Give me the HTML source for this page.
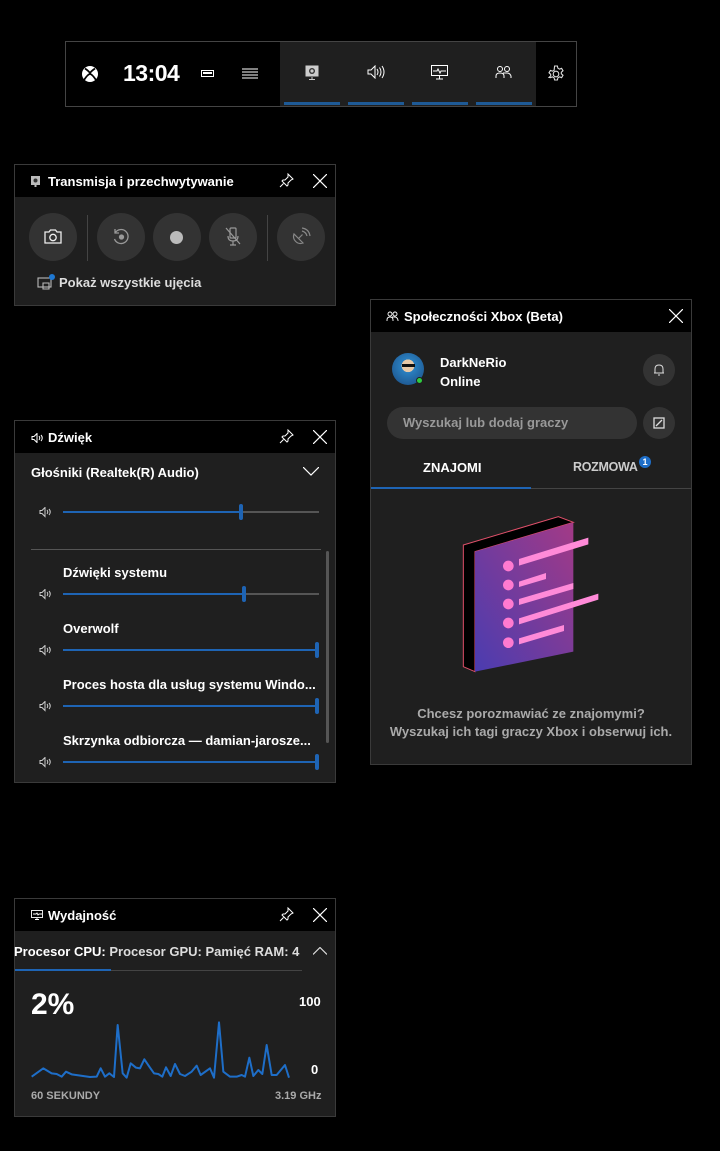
<!DOCTYPE html>
<html><head><meta charset="utf-8"><style>
*{margin:0;padding:0;box-sizing:border-box}
body{width:720px;height:1151px;background:#000;position:relative;overflow:hidden;font-family:"Liberation Sans",sans-serif;color:#fff;font-weight:bold;font-size:13px}
.a{position:absolute}
.panel{position:absolute;border:1px solid #3a3a3a;background:#1f1f1f}
.hdr{position:absolute;left:0;right:0;top:0;height:32px;background:#000}
.ttl{position:absolute;left:33px;top:9px;font-size:13px}
.circ{position:absolute;width:48px;height:48px;border-radius:50%;background:#333}
.track{position:absolute;height:2px;background:#555}
.fill{position:absolute;left:0;top:0;height:2px;background:#1e64b4}
.thumb{position:absolute;width:4px;height:16px;background:#1e64b4;border-radius:2px;top:-7px}
.lbl{position:absolute;font-size:13px}
</style></head><body>

<!-- top bar -->
<div class="a" style="left:65px;top:41px;width:512px;height:66px;border:1px solid #444;background:#000"></div>
<div class="a" style="left:280px;top:42px;width:256px;height:64px;background:#1f1f1f"></div>
<svg class="a" style="left:81px;top:65px" width="18" height="18" viewBox="0 0 18 18"><circle cx="9" cy="9" r="8" fill="#fff"/><path d="M4 3.5 Q9 7 9 8.5 Q9 7 14 3.5 M3 15 Q7 9 9 9 Q11 9 15 15" stroke="#000" stroke-width="1.8" fill="none"/></svg>
<div class="a" style="left:123px;top:60px;font-size:23px;font-weight:bold;letter-spacing:-0.5px">13:04</div>
<div class="a" style="left:201px;top:70px;width:13px;height:7px;border:1.5px solid #fff"><div style="margin:1px;height:2px;background:#fff"></div></div>
<svg class="a" style="left:242px;top:68px" width="16" height="11"><path d="M0 1h16M0 4h16M0 7h16M0 10h16" stroke="#fff" stroke-width="1"/></svg>
<svg class="a" style="left:305px;top:65px" width="14" height="15"><rect x="0.5" y="0.5" width="13" height="11" fill="#ccc"/><circle cx="7" cy="6" r="3" fill="#333"/><circle cx="7" cy="6" r="1.6" fill="#ccc"/><path d="M7 12v3M4 14.5h6" stroke="#ccc"/></svg>
<svg class="a" style="left:367px;top:65px" width="18" height="14" fill="none" stroke="#fff"><path d="M1 5h3l4-4v12l-4-4H1z"/><path d="M10 4q2 3 0 6M12.5 2.5q3 4.5 0 9M15 1q4 6 0 12"/></svg>
<svg class="a" style="left:431px;top:65px" width="17" height="15" fill="none" stroke="#fff"><rect x="0.5" y="0.5" width="16" height="10"/><path d="M2 6h4l1-2 2 4 1-2h5M8.5 11v3M5 14h7"/></svg>
<svg class="a" style="left:495px;top:65px" width="17" height="14" fill="none" stroke="#fff"><circle cx="5" cy="4" r="2.5"/><circle cx="12" cy="4" r="2.5"/><path d="M1 13v-2q0-3 4-3t4 3v2M8 8q1-0 4 0t4 3v2"/></svg>
<div class="a" style="left:284px;top:102px;width:56px;height:3px;background:#1e5a96"></div>
<div class="a" style="left:348px;top:102px;width:56px;height:3px;background:#1e5a96"></div>
<div class="a" style="left:412px;top:102px;width:56px;height:3px;background:#1e5a96"></div>
<div class="a" style="left:476px;top:102px;width:56px;height:3px;background:#1e5a96"></div>
<svg class="a" style="left:547px;top:65px" width="18" height="18" viewBox="0 0 18 18" fill="none" stroke="#ddd" stroke-width="1.1"><circle cx="9" cy="9" r="2.8"/><path d="M7.6 1h2.8l.5 2.2 1.6.9 2.1-.8 1.4 2.4-1.7 1.5v1.6l1.7 1.5-1.4 2.4-2.1-.8-1.6.9-.5 2.2H7.6l-.5-2.2-1.6-.9-2.1.8L2 12.4l1.7-1.5V9.3L2 7.8l1.4-2.4 2.1.8 1.6-.9z"/></svg>

<!-- capture panel -->
<div class="panel" style="left:14px;top:164px;width:322px;height:142px">
 <div class="hdr"></div>
 <svg class="a" style="left:16px;top:11px" width="9" height="11"><rect width="9" height="9" fill="#bbb"/><circle cx="4.5" cy="4.5" r="2" fill="#333"/><rect x="3.5" y="9" width="2" height="2" fill="#bbb"/></svg>
 <div class="ttl">Transmisja i przechwytywanie</div>
 <svg class="a" style="left:264px;top:8px" width="15" height="15" fill="none" stroke="#fff"><path d="M9 1l5 5-2 1-3 3 0 2-1 1-5-5 1-1 2 0 3-3zM4.5 10.5L1 14"/></svg>
 <svg class="a" style="left:298px;top:9px" width="14" height="14" stroke="#fff" stroke-width="1.2"><path d="M0 0L14 14M14 0L0 14"/></svg>
 <div class="circ" style="left:14px;top:48px"></div>
 <div class="circ" style="left:82px;top:48px"></div>
 <div class="circ" style="left:138px;top:48px"></div>
 <div class="circ" style="left:194px;top:48px"></div>
 <div class="circ" style="left:262px;top:48px"></div>
 <div class="a" style="left:72px;top:50px;width:1px;height:46px;background:#444"></div>
 <div class="a" style="left:252px;top:50px;width:1px;height:46px;background:#444"></div>
 <svg class="a" style="left:29px;top:64px" width="18" height="15" fill="none" stroke="#eee" stroke-width="1.3"><path d="M1 3h4l1.5-2h5L13 3h4v11H1z"/><circle cx="9" cy="8.5" r="3.2"/></svg>
 <svg class="a" style="left:97px;top:63px" width="18" height="18" fill="none" stroke="#999" stroke-width="1.3"><path d="M3 5A7 7 0 1 1 2.5 11M3 1v4h4"/><circle cx="9.5" cy="9" r="2" fill="#999"/></svg>
 <div class="a" style="left:155px;top:66px;width:13px;height:13px;border-radius:50%;background:#bbb"></div>
 <svg class="a" style="left:210px;top:62px" width="16" height="19" fill="none" stroke="#999" stroke-width="1.2"><rect x="5" y="1" width="6" height="10" rx="1"/><path d="M3 9q0 5 5 5t5-5M8 14v4M5 18h6M1 1l14 16"/></svg>
 <svg class="a" style="left:276px;top:62px" width="20" height="20" fill="none" stroke="#888" stroke-width="1.2"><path d="M3 7a7 7 0 0 0 9 9zM7.5 11.5l4-4M11 4q4 1 5 5M11 1q7 1 8 8"/></svg>
 <svg class="a" style="left:22px;top:110px" width="17" height="15" fill="none" stroke="#bbb" stroke-width="1.1"><rect x="1" y="3" width="13" height="9"/><path d="M6 8h6v6H6z"/></svg>
 <div class="a" style="left:34px;top:109px;width:6px;height:6px;border-radius:50%;background:#1e78d2"></div>
 <div class="lbl" style="left:44px;top:110px;color:#ddd">Pokaż wszystkie ujęcia</div>
</div>

<!-- sound panel -->
<div class="panel" style="left:14px;top:420px;width:322px;height:363px">
 <div class="hdr"></div>
 <svg class="a" style="left:16px;top:12px" width="13" height="10" fill="none" stroke="#fff"><path d="M1 3.5h2l3-3v9l-3-3H1z"/><path d="M8 3q1.5 2 0 4M10 2q2.5 3 0 6"/></svg>
 <div class="ttl">Dźwięk</div>
 <svg class="a" style="left:264px;top:8px" width="15" height="15" fill="none" stroke="#fff"><path d="M9 1l5 5-2 1-3 3 0 2-1 1-5-5 1-1 2 0 3-3zM4.5 10.5L1 14"/></svg>
 <svg class="a" style="left:298px;top:9px" width="14" height="14" stroke="#fff" stroke-width="1.2"><path d="M0 0L14 14M14 0L0 14"/></svg>
 <div class="lbl" style="left:16px;top:44px">Głośniki (Realtek(R) Audio)</div>
 <svg class="a" style="left:288px;top:46px" width="16" height="9" fill="none" stroke="#fff" stroke-width="1.2"><path d="M0 0l8 8 8-8"/></svg>
 <div class="a" style="left:16px;top:128px;width:290px;height:1px;background:#555"></div>
 <div class="a" style="left:311px;top:130px;width:3px;height:192px;border-radius:2px;background:#555"></div>
 <div class="lbl" style="left:48px;top:144px">Dźwięki systemu</div>
 <div class="lbl" style="left:48px;top:200px">Overwolf</div>
 <div class="lbl" style="left:48px;top:256px">Proces hosta dla usług systemu Windo...</div>
 <div class="lbl" style="left:48px;top:312px">Skrzynka odbiorcza — damian-jarosze...</div>
</div>

<svg class="a" style="left:39px;top:507px" width="14" height="11" fill="none" stroke="#ccc"><path d="M1 3.5h2l3-3v9l-3-3H1z"/><path d="M8 3q1.5 2 0 4M10 2q2.5 3 0 6"/></svg>
<div class="track" style="left:63px;top:511px;width:256px"><div class="fill" style="width:178px"></div><div class="thumb" style="left:176px"></div></div>
<svg class="a" style="left:39px;top:589px" width="14" height="11" fill="none" stroke="#ccc"><path d="M1 3.5h2l3-3v9l-3-3H1z"/><path d="M8 3q1.5 2 0 4M10 2q2.5 3 0 6"/></svg>
<div class="track" style="left:63px;top:593px;width:256px"><div class="fill" style="width:181px"></div><div class="thumb" style="left:179px"></div></div>
<svg class="a" style="left:39px;top:645px" width="14" height="11" fill="none" stroke="#ccc"><path d="M1 3.5h2l3-3v9l-3-3H1z"/><path d="M8 3q1.5 2 0 4M10 2q2.5 3 0 6"/></svg>
<div class="track" style="left:63px;top:649px;width:256px"><div class="fill" style="width:256px"></div><div class="thumb" style="left:252px"></div></div>
<svg class="a" style="left:39px;top:701px" width="14" height="11" fill="none" stroke="#ccc"><path d="M1 3.5h2l3-3v9l-3-3H1z"/><path d="M8 3q1.5 2 0 4M10 2q2.5 3 0 6"/></svg>
<div class="track" style="left:63px;top:705px;width:256px"><div class="fill" style="width:256px"></div><div class="thumb" style="left:252px"></div></div>
<svg class="a" style="left:39px;top:757px" width="14" height="11" fill="none" stroke="#ccc"><path d="M1 3.5h2l3-3v9l-3-3H1z"/><path d="M8 3q1.5 2 0 4M10 2q2.5 3 0 6"/></svg>
<div class="track" style="left:63px;top:761px;width:256px"><div class="fill" style="width:256px"></div><div class="thumb" style="left:252px"></div></div>

<!-- social panel -->
<div class="panel" style="left:370px;top:299px;width:322px;height:466px">
 <div class="hdr"></div>
 <svg class="a" style="left:15px;top:11px" width="13" height="10" fill="none" stroke="#fff" stroke-width="0.9"><circle cx="4" cy="3" r="2"/><circle cx="9" cy="3" r="2"/><path d="M1 10v-1q0-3 3-3t3 3v1M6 6q1 0 3 0t3 3v1"/></svg>
 <div class="ttl">Społeczności Xbox (Beta)</div>
 <svg class="a" style="left:298px;top:9px" width="14" height="14" stroke="#fff" stroke-width="1.2"><path d="M0 0L14 14M14 0L0 14"/></svg>
 <div class="a" style="left:21px;top:53px;width:32px;height:32px;border-radius:50%;background:radial-gradient(circle at 50% 40%,#e8c9a8 0 25%,#2a7fc0 26%,#1a4a80 100%)"></div>
 <div class="a" style="left:31px;top:64px;width:13px;height:3px;background:#111"></div>
 <div class="a" style="left:45px;top:77px;width:7px;height:7px;border-radius:50%;background:#2ecc40;border:1px solid #1f1f1f"></div>
 <div class="lbl" style="left:69px;top:55px">DarkNeRio</div>
 <div class="lbl" style="left:69px;top:74px">Online</div>
 <div class="circ" style="left:272px;top:54px;width:32px;height:32px"></div>
 <svg class="a" style="left:282px;top:63px" width="12" height="13" fill="none" stroke="#ddd"><path d="M2 10V6q0-4 4-4t4 4v4zM1 10h10M5 12h2"/></svg>
 <div class="a" style="left:16px;top:107px;width:250px;height:32px;border-radius:16px;background:#333"></div>
 <div class="lbl" style="left:32px;top:115px;color:#999">Wyszukaj lub dodaj graczy</div>
 <div class="circ" style="left:272px;top:107px;width:32px;height:32px"></div>
 <svg class="a" style="left:282px;top:117px" width="12" height="12" fill="none" stroke="#ddd" stroke-width="1.3"><rect x="1" y="1" width="10" height="10"/><path d="M3 9l6-6"/></svg>
 <div class="lbl" style="left:52px;top:160px">ZNAJOMI</div>
 <div class="lbl" style="left:202px;top:160px;color:#ccc;font-size:12.5px;letter-spacing:-0.3px">ROZMOWA</div>
 <div class="a" style="left:268px;top:156px;width:12px;height:12px;border-radius:50%;background:#1e6ec8;font-size:9px;text-align:center;line-height:12px">1</div>
 <div class="a" style="left:0;top:188px;width:320px;height:1px;background:#444"></div>
 <div class="a" style="left:0;top:187px;width:160px;height:2px;background:#1e64b4"></div>
 <div class="lbl" style="left:0;width:320px;text-align:center;top:405px;color:#aaa;line-height:18px">Chcesz porozmawiać ze znajomymi?<br>Wyszukaj ich tagi graczy Xbox i obserwuj ich.</div>
</div>
<svg class="a" style="left:440px;top:505px" width="180" height="175" viewBox="0 0 540 525">
 <defs><linearGradient id="g" x1="1" y1="0" x2="0" y2="1"><stop offset="0" stop-color="#a33a86"/><stop offset="1" stop-color="#4a3cb0"/></linearGradient></defs>
 <path d="M70 120L355 35L400 52L105 140V500L70 485Z" fill="#000" stroke="#e0506a" stroke-width="3"/>
 <path d="M105 140L400 52V440L105 500Z" fill="url(#g)"/>
 <g fill="#ff7ad0"><circle cx="205" cy="183" r="16"/><circle cx="205" cy="240" r="16"/><circle cx="205" cy="297" r="16"/><circle cx="205" cy="354" r="16"/><circle cx="205" cy="413" r="16"/></g>
 <g fill="#ff8ad8"><path d="M237 162L445 98V118L237 182Z"/><path d="M237 230L318 204V222L237 246Z"/><path d="M237 282L400 234V252L237 300Z"/><path d="M237 340L475 266V284L237 358Z"/><path d="M237 400L372 360V378L237 418Z"/></g>
</svg>

<!-- perf panel -->
<div class="panel" style="left:14px;top:898px;width:322px;height:219px">
 <div class="hdr"></div>
 <svg class="a" style="left:16px;top:11px" width="12" height="10" fill="none" stroke="#fff" stroke-width="0.9"><rect x="0.5" y="0.5" width="11" height="7"/><path d="M2 4h3l1-1 1 2 1-1h3M6 8v2M4 9.5h4"/></svg>
 <div class="ttl">Wydajność</div>
 <svg class="a" style="left:264px;top:8px" width="15" height="15" fill="none" stroke="#fff"><path d="M9 1l5 5-2 1-3 3 0 2-1 1-5-5 1-1 2 0 3-3zM4.5 10.5L1 14"/></svg>
 <svg class="a" style="left:298px;top:9px" width="14" height="14" stroke="#fff" stroke-width="1.2"><path d="M0 0L14 14M14 0L0 14"/></svg>
 <div class="lbl" style="left:-1px;top:45px;white-space:nowrap"><span>Procesor CPU:</span> <span style="color:#ddd">Procesor GPU:</span> <span style="color:#ddd">Pamięć RAM: 4</span></div>
 <svg class="a" style="left:298px;top:48px" width="14" height="8" fill="none" stroke="#ddd" stroke-width="1.2"><path d="M0 7.5l7-7 7 7"/></svg>
 <div class="a" style="left:0;top:71px;width:287px;height:1px;background:#444"></div>
 <div class="a" style="left:0;top:70px;width:96px;height:2px;background:#1e64b4"></div>
 <div class="a" style="left:16px;top:89px;font-size:30px;font-weight:bold">2%</div>
 <div class="a" style="left:284px;top:95px;font-size:13px">100</div>
 <div class="a" style="left:296px;top:163px;font-size:13px">0</div>
 <div class="a" style="left:16px;top:191px;font-size:11px;color:#aaa">60 SEKUNDY</div>
 <div class="a" style="left:260px;top:191px;font-size:11px;color:#aaa">3.19 GHz</div>
</div>
<svg class="a" style="left:10px;top:895px" width="330" height="225" viewBox="0 0 990 675"><polyline fill="none" stroke="#1e6ec8" stroke-width="6" stroke-linejoin="round" points="65,545 100,520 125,535 140,537 155,545 168,530 185,538 240,546 260,545 272,520 285,545 298,535 312,546 323,390 338,535 350,548 362,505 378,518 390,520 403,493 418,515 432,535 445,537 457,545 468,517 482,543 495,507 510,537 525,543 545,530 560,512 572,540 600,520 612,548 627,382 640,530 660,545 680,545 695,540 705,545 718,488 730,543 745,525 757,537 770,450 785,540 800,540 825,510 837,548"/></svg>

</body></html>
